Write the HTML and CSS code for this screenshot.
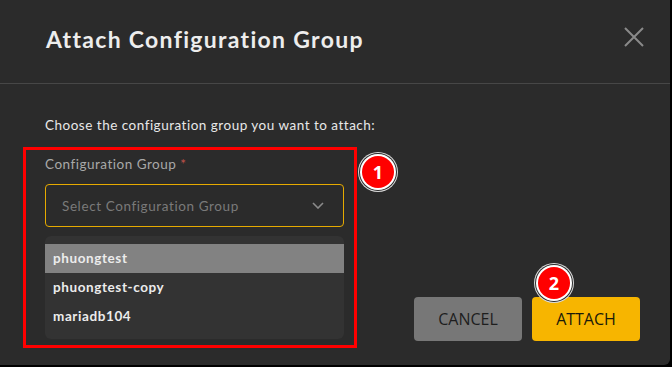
FILE: index.html
```html
<!DOCTYPE html>
<html lang="en">
<head>
    <meta charset="UTF-8">
    <title>Attach Configuration Group</title>
    <link rel="stylesheet" href="styles.css">
</head>
<body>
<div class="modal">
    <div class="modal-header">
        <div class="modal-title">Attach Configuration Group</div>
        <button class="close-btn" aria-label="Close">
            <svg width="20" height="20" viewBox="0 0 20 20">
                <path d="M1 1 L19 19 M19 1 L1 19" stroke="#8a8a8a" stroke-width="2" fill="none"/>
            </svg>
        </button>
    </div>
    <div class="modal-body">
        <p class="intro">Choose the configuration group you want to attach:</p>
        <div class="content-row">
            <div class="annot-box">
                <label class="field-label">Configuration Group <span class="req">*</span></label>
                <div class="select">
                    <span class="placeholder">Select Configuration Group</span>
                    <svg class="chevron" width="12" height="7" viewBox="0 0 12 7">
                        <path d="M1 1 L6 6 L11 1" stroke="#8a8a8a" stroke-width="1.6" fill="none"/>
                    </svg>
                </div>
                <ul class="options">
                    <li class="option active">phuongtest</li>
                    <li class="option">phuongtest-copy</li>
                    <li class="option">mariadb104</li>
                </ul>
                <span class="badge badge-one">1</span>
            </div>
            <div class="actions">
                <button class="btn btn-cancel">CANCEL</button>
                <button class="btn btn-attach">ATTACH<span class="badge badge-two">2</span></button>
            </div>
        </div>
    </div>
</div>
</body>
</html>
```

FILE: styles.css
```css
body {
    margin: 0;
    background-color: #000;
    font-family: 'Lato', sans-serif;
    color: #e6e6e6;
}
.modal {
    width: 670px;
    height: 365px;
    background-color: #2b2b2b;
    border-bottom-right-radius: 6px;
    overflow: hidden;
}
.modal-header {
    height: 83px;
    border-bottom: 1px solid #474747;
    display: flex;
    align-items: center;
    justify-content: space-between;
    padding: 0 26px 0 46px;
}
.modal-title {
    font-size: 23px;
    font-weight: 700;
    letter-spacing: 1.3px;
    color: #ededed;
    margin-top: -6px;
}
.close-btn {
    background: none;
    border: none;
    padding: 0;
    width: 20px;
    height: 20px;
    margin-top: -10px;
    cursor: pointer;
}
.modal-body {
    padding: 32px 30px 0 23px;
}
.intro {
    margin: 0 0 13px 22px;
    font-size: 13.5px;
    line-height: 18px;
    letter-spacing: 0.5px;
    color: #e8e8e8;
}
.content-row {
    display: flex;
    justify-content: space-between;
    align-items: flex-end;
}
.annot-box {
    position: relative;
    width: 299px;
    border: 3px solid #ff0000;
    padding: 5px 10px 6px 19px;
}
.field-label {
    display: block;
    font-size: 13.5px;
    line-height: 18px;
    letter-spacing: 0.5px;
    color: #a8a8a8;
}
.req {
    color: #c0524a;
}
.select {
    margin-top: 11px;
    height: 41px;
    border: 1px solid #e6aa00;
    border-radius: 4px;
    display: flex;
    align-items: center;
    justify-content: space-between;
    padding: 0 19px 0 16px;
}
.placeholder {
    font-size: 13.5px;
    letter-spacing: 0.6px;
    color: #7a7a7a;
}
.options {
    list-style: none;
    margin: 9px 0 0;
    padding: 8px 0;
    background-color: #333333;
    border-radius: 6px;
}
.option {
    height: 29px;
    line-height: 29px;
    padding: 0 8px;
    font-size: 13.5px;
    font-weight: 700;
    letter-spacing: 0.6px;
    color: #ececec;
}
.option.active {
    background-color: #828282;
}
.actions {
    display: flex;
    gap: 10px;
    margin-bottom: 7px;
}
.btn {
    position: relative;
    width: 108px;
    height: 44px;
    border: none;
    border-radius: 4px;
    font-family: 'Open Sans', sans-serif;
    font-size: 16px;
    color: #1e1e1e;
    cursor: pointer;
}
.btn-cancel {
    background-color: #777777;
}
.btn-attach {
    background-color: #f7b500;
    color: #1a1a0a;
}
.badge {
    position: absolute;
    width: 32px;
    height: 32px;
    border-radius: 50%;
    background-color: #f00;
    color: #fff;
    font-family: 'Open Sans', sans-serif;
    font-weight: 700;
    font-size: 18px;
    line-height: 32px;
    text-align: center;
    box-shadow: 0 0 0 2px #fff, 0 0 0 3px #2a2a2a, 0 0 0 4px #d8d8d8;
}
.badge-one {
    left: 336px;
    top: 6px;
}
.badge-two {
    left: 6px;
    top: -30px;
}
```
